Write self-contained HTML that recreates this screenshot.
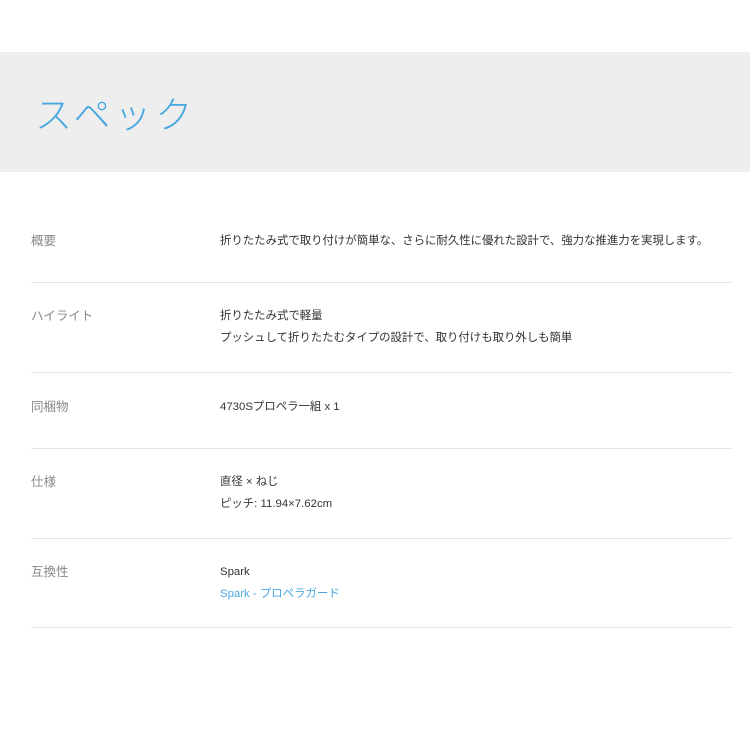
<!DOCTYPE html>
<html><head><meta charset="utf-8"><style>
body{margin:0;width:750px;height:750px;background:#fff;font-family:"Liberation Sans","Noto Sans CJK JP",sans-serif;position:relative;overflow:hidden}
.band{position:absolute;left:0;top:52px;width:750px;height:120px;background:#eeeeee}
.title{position:absolute;left:35px;top:92px;font-size:37px;line-height:48px;color:#4aa8e0;letter-spacing:4px;font-weight:300}
.t{position:absolute;font-size:11.4px;line-height:22px;color:#333;white-space:nowrap}
.l{left:31px;color:#888;font-size:12.5px}
.v{left:220px}
.hr{position:absolute;left:31px;width:701px;height:1px;background:#e3e3e3}
a{color:#4aa8e0;text-decoration:none}
</style></head><body>
<div class="band"></div>
<div class="title">スペック</div>

<div class="t l" style="top:230px">概要</div>
<div class="t v" style="top:230px">折りたたみ式で取り付けが簡単な、さらに耐久性に優れた設計で、強力な推進力を実現します。</div>
<div class="hr" style="top:282px"></div>

<div class="t l" style="top:305px">ハイライト</div>
<div class="t v" style="top:305px">折りたたみ式で軽量<br>プッシュして折りたたむタイプの設計で、取り付けも取り外しも簡単</div>
<div class="hr" style="top:372px"></div>

<div class="t l" style="top:396px">同梱物</div>
<div class="t v" style="top:396px">4730Sプロペラ一組 x 1</div>
<div class="hr" style="top:448px"></div>

<div class="t l" style="top:471px">仕様</div>
<div class="t v" style="top:471px">直径 × ねじ<br>ピッチ: 11.94×7.62cm</div>
<div class="hr" style="top:538px"></div>

<div class="t l" style="top:561px">互換性</div>
<div class="t v" style="top:561px">Spark<br><a>Spark - プロペラガード</a></div>
<div class="hr" style="top:627px"></div>
</body></html>
